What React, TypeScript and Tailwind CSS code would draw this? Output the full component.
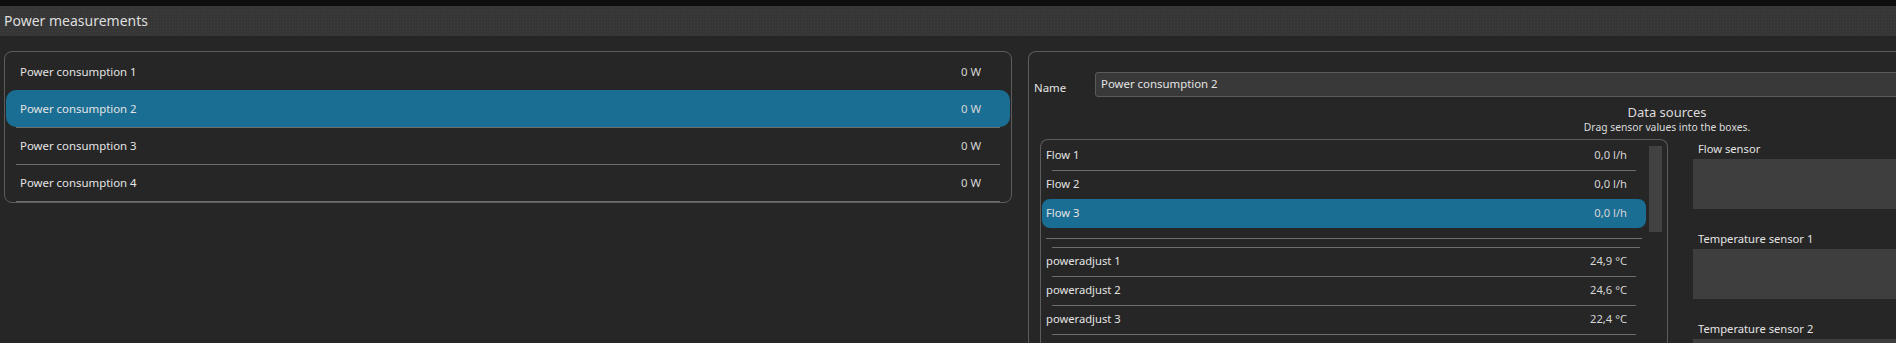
import React from "react";

// Power measurement list entries
const measurements = [
  { name: "Power consumption 1", value: "0 W" },
  { name: "Power consumption 2", value: "0 W", selected: true },
  { name: "Power consumption 3", value: "0 W" },
  { name: "Power consumption 4", value: "0 W" },
];

// Sensor values that can be dragged into the boxes
const sensors = [
  { name: "Flow 1", value: "0,0 l/h" },
  { name: "Flow 2", value: "0,0 l/h" },
  { name: "Flow 3", value: "0,0 l/h", selected: true },
  { spacer: true, h: "h-[10px]", inset: "left-[4px] right-[4px]" },
  { spacer: true, h: "h-[9px]", inset: "left-[10px] right-[6px]" },
  { name: "poweradjust 1", value: "24,9 °C" },
  { name: "poweradjust 2", value: "24,6 °C" },
  { name: "poweradjust 3", value: "22,4 °C" },
];

const targets = ["Flow sensor", "Temperature sensor 1", "Temperature sensor 2"];

export default function App() {
  return (
    <div className="w-[1896px] h-[343px] overflow-hidden bg-[#262626] text-[#e4e4e4] font-['Noto_Sans',sans-serif]">
      <div className="h-[6px] bg-[#0e0e0e]" />
      {/* Title bar */}
      <div className="h-[30px] bg-[#363636] bg-[radial-gradient(circle,#404040_0.8px,transparent_1px)] bg-[length:3px_3px] pl-[4px] text-[14px] leading-[30px] text-[#dedede]">
        Power measurements
      </div>

      <div className="flex items-start pt-[15px]">
        {/* Measurement list */}
        <div className="ml-[4px] w-[1008px] h-[152px] shrink-0 rounded-[8px] border border-[#5c5c5c] pt-px px-px">
          {measurements.map((m) => (
            <div
              key={m.name}
              className={
                "relative flex h-[37px] items-center justify-between pl-[14px] pr-[29px] text-[11.4px] " +
                (m.selected ? "rounded-[10px] bg-[#1b6e93]" : "")
              }
            >
              <span>{m.name}</span>
              <span className="text-[#d6d6d6]">{m.value}</span>
              <div className="absolute bottom-[-1px] left-[10px] right-[10px] h-px bg-[#6e6e6e]" />
            </div>
          ))}
        </div>

        {/* Detail panel */}
        <div className="ml-[16px] w-[900px] h-[292px] shrink-0 rounded-tl-[8px] border-l border-t border-[#5c5c5c]">
          <div className="flex items-start pt-[20px]">
            <span className="w-[66px] pl-[5px] pt-[7px] text-[11.4px]">Name</span>
            <div className="h-[25px] w-[820px] rounded-[3px] border border-[#5a5a5a] bg-[#393939] pl-[5px] text-[11.4px] leading-[22px]">
              Power consumption 2
            </div>
          </div>

          <div className="ml-[11px] w-[1254px] pt-[7px] text-center">
            <div className="text-[13px] leading-[17px] text-[#dcdcdc]">Data sources</div>
            <div className="text-[10.3px] leading-[13px] text-[#dcdcdc]">
              Drag sensor values into the boxes.
            </div>
          </div>

          <div className="flex items-start pt-[5px]">
            {/* Sensor list */}
            <div className="ml-[11px] flex w-[628px] h-[220px] shrink-0 rounded-tl-[8px] rounded-tr-[8px] border-l border-t border-r border-[#5c5c5c] pl-px pt-px">
              <div className="w-[604px]">
                {sensors.map((s, i) =>
                  s.spacer ? (
                    <div key={i} className={"relative " + s.h}>
                      <div className={"absolute bottom-[-1px] h-px bg-[#6e6e6e] " + s.inset} />
                    </div>
                  ) : (
                    <div
                      key={i}
                      className={
                        "relative flex h-[29px] items-center justify-between pl-[4px] pr-[19px] text-[11.2px] " +
                        (s.selected ? "rounded-[8px] bg-[#1b6e93]" : "")
                      }
                    >
                      <span>{s.name}</span>
                      <span className="text-[#d6d6d6]">{s.value}</span>
                      {!s.selected && (
                        <div className="absolute bottom-[-1px] left-[10px] right-[10px] h-px bg-[#6e6e6e]" />
                      )}
                    </div>
                  )
                )}
              </div>
              <div className="ml-[3px] mt-[5px] h-[86px] w-[13px] bg-[#424242]" />
            </div>

            {/* Drop targets */}
            <div className="ml-[25px] w-[260px] shrink-0">
              {targets.map((t) => (
                <div key={t} className="pb-[20px]">
                  <div className="h-[20px] pl-[5px] text-[11.2px] leading-[20px]">{t}</div>
                  <div className="h-[50px] bg-[#3e3e3e]" />
                </div>
              ))}
            </div>
          </div>
        </div>
      </div>
    </div>
  );
}
